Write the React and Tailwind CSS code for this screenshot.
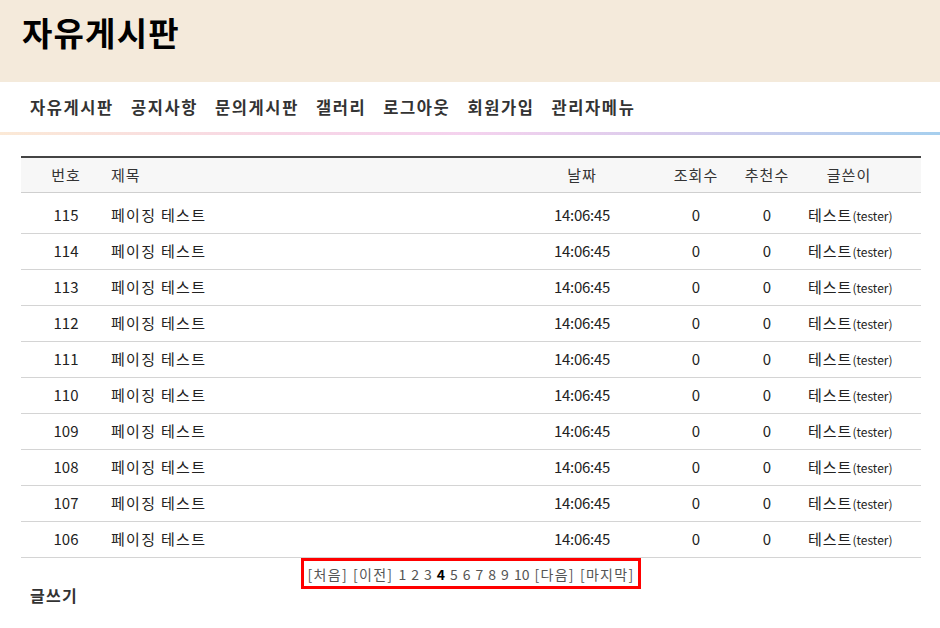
import React from "react";

const rows = [115, 114, 113, 112, 111, 110, 109, 108, 107, 106];
const nav = ["자유게시판", "공지사항", "문의게시판", "갤러리", "로그아웃", "회원가입", "관리자메뉴"];
const font = { fontFamily: '"Noto Sans CJK KR", "Noto Sans", sans-serif' };

export default function App() {
  return (
    <div className="w-[940px] min-h-[628px] bg-white text-[#222]" style={font}>
      <header className="h-[82px] bg-[#f4eadb] flex items-start pt-[16px] pl-[22px]">
        <h1 className="text-[33px] font-bold text-black tracking-[1.2px] leading-none">자유게시판</h1>
      </header>
      <nav className="h-[50px] flex items-center pl-[30px] gap-[17px]">
        {nav.map((n) => (
          <span key={n} className="text-[16.5px] font-bold text-[#333] leading-none tracking-[1.6px]">{n}</span>
        ))}
      </nav>
      <div className="h-[3px] bg-[linear-gradient(to_right,#fbe9d6,#f7d6e6_30%,#f4d2ee_50%,#dcccec_70%,#a6cfee)]" />
      <main className="pl-[21px] pr-[19px] pt-[21px]">
        <div className="border-t-2 border-[#444]">
          <div className="flex h-[35px] items-center bg-[#f7f7f7] border-b border-[#cfcfcf] text-[15px] text-[#333] tracking-[1px]">
            <div className="w-[90px] text-center">번호</div>
            <div className="flex-1">제목</div>
            <div className="w-[156px] text-center">날짜</div>
            <div className="w-[72px] text-center">조회수</div>
            <div className="w-[70px] text-center">추천수</div>
            <div className="w-[94px] text-center">글쓴이</div>
            <div className="w-[25px]" />
          </div>
          {rows.map((r, i) => (
            <div
              key={r}
              className={`flex items-center border-b border-[#d4d4d4] text-[15px] text-[#222] ${i === 0 ? "h-[41px] pt-[4px]" : "h-[36px]"}`}
            >
              <div className="w-[90px] text-center">{r}</div>
              <div className="flex-1 tracking-[1.3px]">페이징 테스트</div>
              <div className="w-[156px] text-center tracking-[-0.3px]">14:06:45</div>
              <div className="w-[72px] text-center">0</div>
              <div className="w-[70px] text-center">0</div>
              <div className="w-[94px] pl-[6px] whitespace-nowrap">
                <span className="tracking-[1px]">테스트</span>
                <span className="text-[12px]">(tester)</span>
              </div>
              <div className="w-[25px]" />
            </div>
          ))}
        </div>
        <div className="flex justify-center">
          <div className="border-[3px] border-[#ff0000] px-[4px] h-[31px] flex items-center text-[14px] text-[#555] gap-[5px] whitespace-nowrap leading-none">
            <span className="tracking-[1.3px]">[처음]</span>
            <span className="tracking-[1.3px]">[이전]</span>
            <span>1</span>
            <span>2</span>
            <span>3</span>
            <span className="font-bold text-black">4</span>
            <span>5</span>
            <span>6</span>
            <span>7</span>
            <span>8</span>
            <span>9</span>
            <span>10</span>
            <span className="tracking-[1.3px]">[다음]</span>
            <span className="tracking-[1.3px]">[마지막]</span>
          </div>
        </div>
        <div className="pl-[9px] mt-[-6px] text-[16px] font-bold text-[#333] leading-none h-[24px] flex items-center tracking-[1.3px]">글쓰기</div>
      </main>
    </div>
  );
}
